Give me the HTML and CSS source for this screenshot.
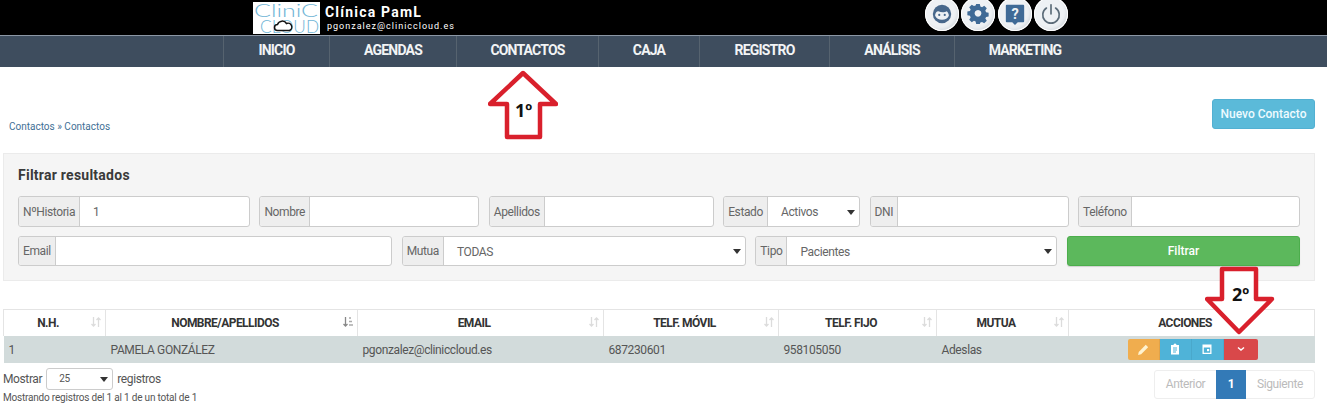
FILE: index.html
```html
<!DOCTYPE html>
<html lang="es">
<head>
<meta charset="utf-8">
<title>Contactos</title>
<link rel="stylesheet" href="styles.css">
</head>
<body>
<header class="topbar">
  <svg class="logo" viewBox="0 0 67 32" width="67" height="32">
    <rect width="67" height="32" fill="#fff"/>
    <text class="logo-t" x="1" y="15" font-size="18" textLength="64" lengthAdjust="spacingAndGlyphs">CliniC</text>
    <text class="logo-t" x="7" y="31" font-size="18" textLength="59" lengthAdjust="spacingAndGlyphs">CLOUD</text>
    <path d="M26 28.500h-1.500a3 3 0 0 1 0-6 5 5 0 0 1 9-1 3.600 3.600 0 0 1 3 7z" fill="#fff" stroke="#111" stroke-width="1.500"/>
  </svg>
  <div class="brand">
    <div class="brand-name">Clínica PamL</div>
    <div class="brand-mail">pgonzalez@cliniccloud.es</div>
  </div>
  <div class="round-icons">
    <span class="round"><svg viewBox="0 0 24 24" width="24" height="24"><circle cx="12" cy="12" r="10" fill="#48688c"/><path d="M4.500 14c0-3 1.500-5 3.500-5 3 1.500 7 1.500 9 0 1.500 1 2.500 3 2.500 5a8 6.500 0 0 1-15 0z" fill="#eef1f4"/><circle cx="9" cy="13" r="1.200" fill="#48688c"/><circle cx="15" cy="13" r="1.200" fill="#48688c"/></svg></span>
    <span class="round"><svg viewBox="0 0 24 24" width="24" height="24"><path fill="#3f6a96" fill-rule="evenodd" d="M10 2h4l.6 2.800 1.800.8L18.800 4l2.800 2.800-1.600 2.400.8 1.800 2.800.6v4l-2.800.6-.8 1.800 1.600 2.400-2.800 2.800-2.400-1.600-1.800.8L14 24h-4l-.6-2.800-1.800-.8L5.200 22l-2.800-2.800L4 16.800l-.8-1.800L.4 14.400v-4l2.800-.6.800-1.800L2.400 5.600 5.200 2.800l2.400 1.600 1.800-.8z M12 8.500a3.700 3.700 0 1 0 .01 0z" transform="translate(0 -1)"/></svg></span>
    <span class="round"><svg viewBox="0 0 24 24" width="24" height="24"><path fill="#3f6a96" d="M3 2h18a1 1 0 0 1 1 1v17a1 1 0 0 1-1 1h-6l-3 3-3-3H3a1 1 0 0 1-1-1V3a1 1 0 0 1 1-1z"/><text class="q" x="12" y="17" text-anchor="middle">?</text></svg></span>
    <span class="round"><svg viewBox="0 0 24 24" width="24" height="24" fill="none" stroke="#5b6b78" stroke-width="1.800" stroke-linecap="round"><path d="M7 5.500a9 9 0 1 0 10 0"/><path d="M12 2v10"/></svg></span>
  </div>
</header>
<nav class="mainnav">
  <a class="nav-item w1">INICIO</a>
  <a class="nav-item w2">AGENDAS</a>
  <a class="nav-item w3">CONTACTOS</a>
  <a class="nav-item w4">CAJA</a>
  <a class="nav-item w5">REGISTRO</a>
  <a class="nav-item w6">ANÁLISIS</a>
  <a class="nav-item w7">MARKETING</a>
</nav>
<div class="pagehead">
  <div class="crumbs">Contactos » Contactos</div>
  <button class="btn-new">Nuevo Contacto</button>
</div>
<section class="filters">
  <h2 class="filters-title">Filtrar resultados</h2>
  <div class="frow">
    <div class="group g1"><span class="addon">NºHistoria</span><span class="field">1</span></div>
    <div class="group g2"><span class="addon">Nombre</span><span class="field"></span></div>
    <div class="group g3"><span class="addon">Apellidos</span><span class="field"></span></div>
    <div class="group g4"><span class="addon">Estado</span><span class="field sel">Activos<i class="caret"></i></span></div>
    <div class="group g5"><span class="addon">DNI</span><span class="field"></span></div>
    <div class="group g6"><span class="addon">Teléfono</span><span class="field"></span></div>
  </div>
  <div class="frow row2">
    <div class="group g7"><span class="addon">Email</span><span class="field"></span></div>
    <div class="group g8"><span class="addon">Mutua</span><span class="field sel">TODAS<i class="caret"></i></span></div>
    <div class="group g9"><span class="addon">Tipo</span><span class="field sel">Pacientes<i class="caret"></i></span></div>
    <button class="btn-filter">Filtrar</button>
  </div>
</section>
<table class="grid">
  <thead>
    <tr>
      <th class="c1">N.H.<svg class="sort" viewBox="0 0 12 12" width="12" height="12"><path d="M3.500 1v9M1.500 8l2 2 2-2M8.500 11V2M6.500 4l2-2 2 2" fill="none" stroke="#dcdcdc" stroke-width="1.300"/></svg></th>
      <th class="c2">NOMBRE/APELLIDOS<svg class="sort" viewBox="0 0 12 12" width="12" height="12"><path d="M3.500 1v9M1.500 8l2 2 2-2" fill="none" stroke="#888" stroke-width="1.300"/><path d="M7 2h2M7 5.500h3M7 9h4" stroke="#aaa" stroke-width="1.500"/></svg></th>
      <th class="c3">EMAIL<svg class="sort" viewBox="0 0 12 12" width="12" height="12"><path d="M3.500 1v9M1.500 8l2 2 2-2M8.500 11V2M6.500 4l2-2 2 2" fill="none" stroke="#dcdcdc" stroke-width="1.300"/></svg></th>
      <th class="c4">TELF. MÓVIL<svg class="sort" viewBox="0 0 12 12" width="12" height="12"><path d="M3.500 1v9M1.500 8l2 2 2-2M8.500 11V2M6.500 4l2-2 2 2" fill="none" stroke="#dcdcdc" stroke-width="1.300"/></svg></th>
      <th class="c5">TELF. FIJO<svg class="sort" viewBox="0 0 12 12" width="12" height="12"><path d="M3.500 1v9M1.500 8l2 2 2-2M8.500 11V2M6.500 4l2-2 2 2" fill="none" stroke="#dcdcdc" stroke-width="1.300"/></svg></th>
      <th class="c6">MUTUA<svg class="sort" viewBox="0 0 12 12" width="12" height="12"><path d="M3.500 1v9M1.500 8l2 2 2-2M8.500 11V2M6.500 4l2-2 2 2" fill="none" stroke="#dcdcdc" stroke-width="1.300"/></svg></th>
      <th class="c7">ACCIONES</th>
    </tr>
  </thead>
  <tbody>
    <tr>
      <td>1</td>
      <td>PAMELA GONZÁLEZ</td>
      <td>pgonzalez@cliniccloud.es</td>
      <td>687230601</td>
      <td>958105050</td>
      <td>Adeslas</td>
      <td class="acts">
        <div class="act-group">
          <span class="act orange"><svg viewBox="0 0 12 12" width="13" height="13"><path d="M1 11l.6-2.800 6.500-6.500 2.200 2.200-6.500 6.500z" fill="#fff3d0"/></svg></span>
          <span class="act blue"><svg viewBox="0 0 12 12" width="12" height="12"><path d="M2 2h2.500a1.500 1.500 0 0 1 3 0H10v9.500H2z" fill="#fff"/><path d="M4 5h4M4 7h4M4 9h3" stroke="#4fb3d8"/></svg></span>
          <span class="act blue"><svg viewBox="0 0 12 12" width="12" height="12"><path d="M1.500 1.500h9v9.500h-9zM2.800 4.500v5.200h6.400V4.500z" fill="#fff" fill-rule="evenodd"/><rect x="6" y="6" width="2.200" height="2.200" fill="#fff"/></svg></span>
          <span class="act red"><svg viewBox="0 0 12 12" width="12" height="12"><path d="M3 4.500l3 2.500 3-2.500" fill="none" stroke="#fff" stroke-width="1.500"/></svg></span>
        </div>
      </td>
    </tr>
  </tbody>
</table>
<div class="tfoot">
  <div class="tinfo">
    <div class="len">Mostrar <span class="len-sel">25<i class="caret"></i></span> registros</div>
    <div class="count">Mostrando registros del 1 al 1 de un total de 1</div>
  </div>
  <div class="pager"><span class="pg prev">Anterior</span><span class="pg cur">1</span><span class="pg">Siguiente</span></div>
</div>
<div class="callout one">
  <svg viewBox="0 0 70 70" width="70" height="70"><path d="M35 3L2 34h17v33h33V34h16z" fill="#fff" stroke="#d9202c" stroke-width="4.500" stroke-linejoin="round"/></svg>
  <span class="callout-t">1º</span>
</div>
<div class="callout two">
  <svg viewBox="0 0 70 70" width="70" height="70"><path d="M17 3h34v30h16L34 66 2 33h15z" fill="#fff" stroke="#d9202c" stroke-width="4.500" stroke-linejoin="round"/></svg>
  <span class="callout-t">2º</span>
</div>
</body>
</html>
```
FILE: styles.css
```css
* { box-sizing: border-box; }
html, body { margin: 0; padding: 0; height: 417px; overflow: hidden; background: #fff; }
body { font-family: Roboto, "Liberation Sans", sans-serif; font-size: 12px; letter-spacing: -.38px; color: #555; position: relative; }

.topbar { height: 35px; background: #000; display: flex; align-items: flex-start; padding-left: 253px; }
.logo { margin-top: 2px; flex: none; overflow: visible; }
.logo-t { font-family: Lato, sans-serif; font-weight: 300; fill: #6fb5d6; letter-spacing: 0; }
.brand { margin-left: 5px; color: #fff; padding-top: 4px; width: 601px; letter-spacing: 0; }
.brand-name { font-size: 14px; font-weight: 700; letter-spacing: 1.200px; line-height: 17px; }
.brand-mail { font-size: 9px; letter-spacing: 1px; line-height: 11px; padding-left: 2px; }
.round-icons { display: flex; gap: 2.300px; margin-top: -3px; margin-left: -1px; }
.round { width: 34px; height: 34px; border-radius: 50%; background: #eef1f4; box-shadow: inset 0 0 0 1px #fff, inset -2px -2px 3px #d8dde2; display: flex; align-items: center; justify-content: center; }
.round svg { width: 22px; height: 22px; }
.q { font: 700 16px Roboto, sans-serif; fill: #eef1f4; }

.mainnav { height: 32px; background: #3e4d5e; border-top: 1px solid #8b97a5; display: flex; padding-left: 223px; }
.nav-item { height: 31px; padding-bottom: 3px; border-left: 1px solid #56636f; color: #f2f4f5; font-size: 14px; font-weight: 700; letter-spacing: -.8px; display: flex; align-items: center; justify-content: center; }
.w1 { width: 106px; } .w2 { width: 127px; } .w3 { width: 142px; } .w4 { width: 101px; }
.w5 { width: 130px; } .w6 { width: 125px; } .w7 { width: 141px; }

.pagehead { height: 86px; display: flex; justify-content: space-between; align-items: flex-end; padding: 0 12px 24px 9px; }
.crumbs { color: #3f7096; font-size: 10px; line-height: 12px; letter-spacing: 0; margin-bottom: -4px; }
.btn-new { width: 103px; height: 30px; border: 1px solid #52b0d2; border-radius: 3px; background: #5bbad9; color: #eefbff; font: 500 12px Roboto, sans-serif; padding: 0; }

.filters { margin: 0 12px 0 3px; height: 128px; background: #f5f5f5; border: 1px solid #ebebeb; padding: 0 14px; }
.filters-title { margin: 0; font-size: 14px; font-weight: 700; color: #3a3a3a; letter-spacing: .25px; line-height: 17px; padding-top: 13px; height: 42px; }
.frow { display: flex; justify-content: space-between; height: 31px; }
.row2 { margin-top: 9px; height: 30px; }
.group { display: flex; border: 1px solid #ccc; border-radius: 3px; background: #fff; overflow: hidden; }
.addon { background: #eee; border-right: 1px solid #ccc; padding: 0 4px; display: flex; align-items: center; color: #666; white-space: nowrap; }
.field { flex: 1; display: flex; align-items: center; padding: 1px 0 0 13px; color: #666; position: relative; }
.g1 { width: 232px; } .g2 { width: 220px; } .g3 { width: 225px; } .g4 { width: 137px; } .g5 { width: 199px; } .g6 { width: 222px; }
.g7 { width: 374px; } .g8 { width: 344px; } .g9 { width: 302px; }
.caret { position: absolute; right: 4px; top: 50%; margin-top: -2px; border: 4px solid transparent; border-top: 5px solid #333; border-bottom: 0; }
.btn-filter { width: 233px; height: 30px; background: #5cb85c; border: 1px solid #4cae4c; border-radius: 3px; color: #fff; font: 500 12px Roboto, sans-serif; padding: 0; box-shadow: 0 1px 1px rgba(0,0,0,.15); }

.grid { margin: 28px 0 0 3px; width: 1311px; border-collapse: collapse; table-layout: fixed; }
.grid th { height: 26px; position: relative; border: 1px solid #e4e4e4; border-bottom: 0; color: #333; font-size: 12px; font-weight: 700; letter-spacing: -.55px; text-align: center; padding: 0 13px 0 0; }
.grid td { height: 27px; background: #d2dbdb; padding: 1px 5px 0; color: #555; }
.sort { position: absolute; right: 3px; top: 6px; }
.c1 { width: 102px; } .c2 { width: 252px; } .c3 { width: 246px; } .c4 { width: 175px; } .c5 { width: 158px; } .c6 { width: 132px; } .c7 { width: 246px; }
.grid td.acts { padding: 0; }
.act-group { display: flex; margin-left: 59px; height: 21px; border-radius: 2px; overflow: hidden; width: 130px; }
.act { width: 32px; display: flex; align-items: center; justify-content: center; border-right: 1px solid rgba(0,0,0,.06); }
.act:last-child { width: 34px; border-right: 0; }
.orange { background: #f0ad4e; } .blue { background: #4fb3d8; } .red { background: #d9484a; }

.tfoot { display: flex; justify-content: space-between; padding: 5px 12px 0 3px; }
.len { display: flex; align-items: center; gap: 3px; height: 22px; }
.len-sel { position: relative; width: 67px; height: 22px; border: 1px solid #ccc; border-radius: 3px; font-size: 10px; padding-left: 12px; display: flex; align-items: center; margin: 0 1px; }
.count { font-size: 10px; letter-spacing: -.2px; color: #555; line-height: 12px; margin-top: 2px; }
.pager { display: flex; height: 29px; margin-top: 2px; border: 1px solid #eee; border-radius: 3px; width: 161px; }
.pg { display: flex; align-items: center; justify-content: center; color: #bbb; flex: 1; }
.pg.prev { flex: none; width: 61px; }
.pg.cur { flex: none; width: 30px; background: #337ab7; color: #fff; font-weight: 700; height: 29px; margin-top: -1px; }

.callout { position: absolute; width: 70px; height: 70px; }
.callout-t { position: absolute; font: 700 18px "Noto Sans", sans-serif; color: #111; letter-spacing: 0; }
.one { left: 488px; top: 70px; }
.one .callout-t { left: 27px; top: 28px; }
.two { left: 1205px; top: 266px; }
.two .callout-t { left: 27px; top: 16px; }
```
